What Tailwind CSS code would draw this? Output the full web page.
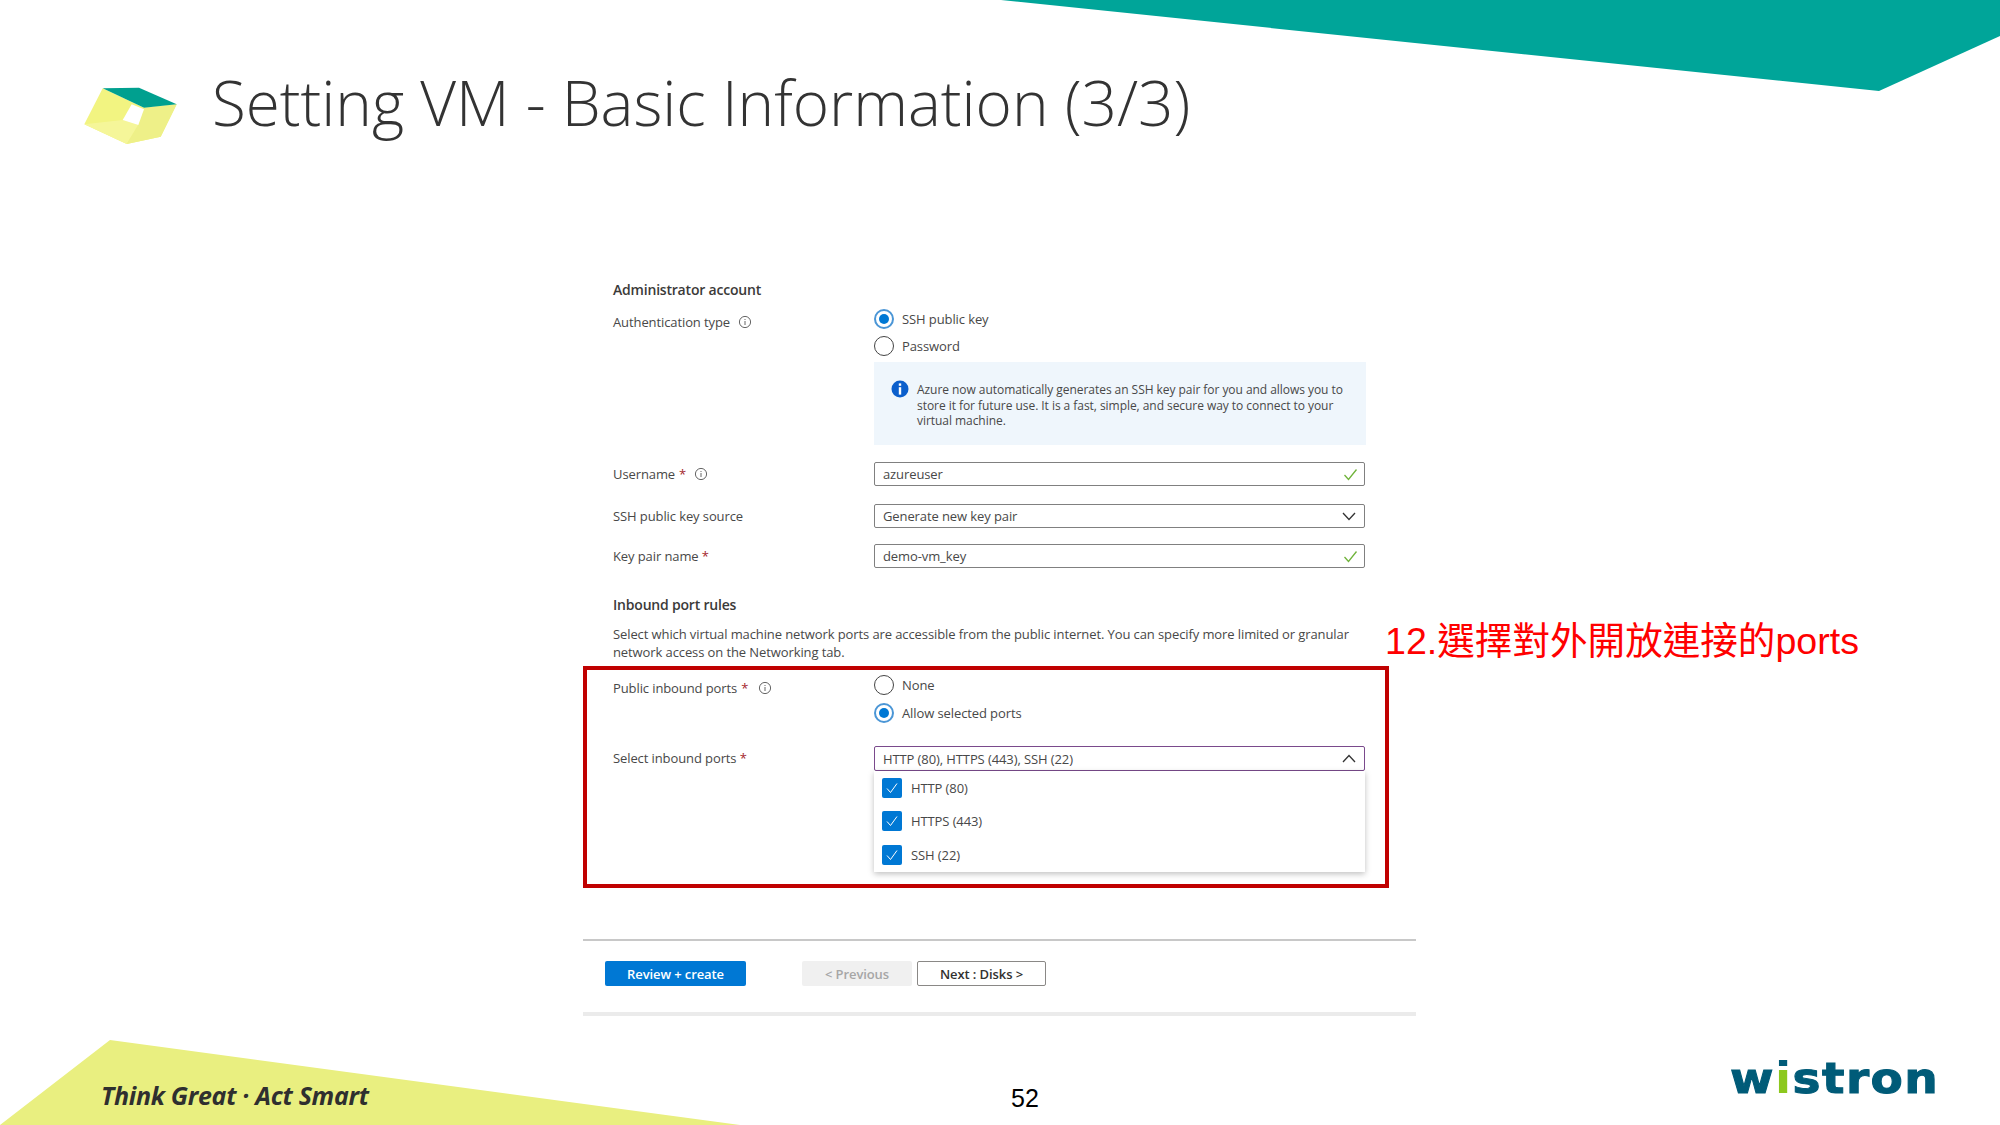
<!DOCTYPE html>
<html lang="en">
<head>
    <meta charset="UTF-8">
    <title>Setting VM - Basic Information (3/3)</title>
    <script src="https://cdn.jsdelivr.net/npm/@tailwindcss/browser@4"></script>
</head>

<body class="bg-white">
    <div class="relative w-[2000px] h-[1125px] overflow-hidden bg-white font-['Open_Sans',sans-serif]">
        <!-- Slide decoration -->
        <svg class="absolute left-0 top-0 w-[2000px] h-[1125px]" viewBox="0 0 2000 1125">
            <polygon points="1001,0 2000,0 2000,36 1879,91" fill="#00a599"/>
            <polygon points="0,1125 110,1040 740,1125" fill="#e9ef80"/>
        </svg>

        <div class="relative">
            <!-- Title -->
            <div class="flex items-center h-[205px] pl-[84px] pb-[2px]">
                <svg class="w-[96px] h-[60px] mr-[32px] mt-[28px]" viewBox="84 86 96 60">
                    <polygon points="102.7,88.3 84.3,124.3 126.7,144 160.7,136.7 176.7,104.3 144,107.7" fill="#f2f481"/>
                    <polygon points="84.3,124.3 122.7,120 138.3,125 126.7,144" fill="#f5f699"/>
                    <polygon points="144,107.7 176.7,104.3 160.7,136.7 126.7,144 138.3,125" fill="#eef088"/>
                    <polygon points="102.7,88.3 139,87.7 176.7,104.3 144,107.7" fill="#00a08f"/>
                    <polygon points="131.7,104.3 144,109.3 138.3,125 122.7,120" fill="#ffffff"/>
                </svg>
                <h1 class="text-[62px] leading-none font-light text-[#333333] font-['Open_Sans',sans-serif]">Setting VM - Basic Information (3/3)</h1>
            </div>

            <!-- Azure form -->
            <div class="ml-[583px] w-[833px] pt-[75px] text-[13px] leading-[18px] tracking-[-0.1px] text-[#484848]">
                <div class="pl-[30px] h-[20px] text-[14px] leading-[20px] tracking-[-0.2px] font-semibold text-[#3b3a39]">Administrator account</div>

                <div class="grid grid-cols-[261px_491px] pl-[30px] mt-[8px]">
                    <div class="flex items-center gap-[8px] h-[22px] mt-[3px]">
                        Authentication type
                        <svg class="w-[14px] h-[14px]" viewBox="0 0 14 14"><circle cx="7" cy="7" r="5.6" fill="none" stroke="#666" stroke-width="1"/><path d="M7 6v4M7 4v1" stroke="#666" stroke-width="1"/></svg>
                    </div>
                    <div>
                        <div class="flex items-center gap-[8px] h-[22px]">
                            <span class="flex items-center justify-center w-[20px] h-[20px] rounded-full border-2 border-[#4b96d6]"><span class="w-[10px] h-[10px] rounded-full bg-[#0078d4]"></span></span>
                            SSH public key
                        </div>
                        <div class="flex items-center gap-[8px] h-[22px] mt-[5px]">
                            <span class="w-[20px] h-[20px] rounded-full border-[1.5px] border-[#444444]"></span>
                            Password
                        </div>
                        <div class="flex w-[492px] h-[83px] mt-[5px] pl-[17px] pt-[18px] gap-[8px] bg-[#eff6fc] text-[12px] tracking-[-0.05px] leading-[15.5px]">
                            <svg class="w-[18px] h-[18px] shrink-0" viewBox="0 0 18 18"><circle cx="9" cy="9" r="8.5" fill="#0b5fcc"/><rect x="7.8" y="3.4" width="2.4" height="2.4" fill="#fff"/><rect x="7.8" y="7.2" width="2.4" height="7.4" fill="#fff"/></svg>
                            <p class="w-[440px] mt-[2px]">Azure now automatically generates an SSH key pair for you and allows you to store it for future use. It is a fast, simple, and secure way to connect to your virtual machine.</p>
                        </div>
                    </div>
                </div>

                <div class="grid grid-cols-[261px_491px] pl-[30px] mt-[17px] items-center">
                    <div class="flex items-center h-[24px]">Username <span class="text-[#a4262c] ml-[4px]">*</span>
                        <svg class="w-[14px] h-[14px] ml-[8px]" viewBox="0 0 14 14"><circle cx="7" cy="7" r="5.6" fill="none" stroke="#666" stroke-width="1"/><path d="M7 6v4M7 4v1" stroke="#666" stroke-width="1"/></svg>
                    </div>
                    <div class="flex items-center justify-between h-[24px] pl-[8px] pr-[6px] border border-[#808080] rounded-[2px]">
                        azureuser
                        <svg class="w-[15px] h-[13px]" viewBox="0 0 15 13"><path d="M1.5 7l4 4.5 8-10" fill="none" stroke="#6fb33a" stroke-width="1.3"/></svg>
                    </div>
                </div>

                <div class="grid grid-cols-[261px_491px] pl-[30px] mt-[18px] items-center">
                    <div class="h-[24px] leading-[24px]">SSH public key source</div>
                    <div class="flex items-center justify-between h-[24px] pl-[8px] pr-[8px] border border-[#808080] rounded-[2px]">
                        Generate new key pair
                        <svg class="w-[14px] h-[9px]" viewBox="0 0 14 9"><path d="M1 1l6 6.5L13 1" fill="none" stroke="#333" stroke-width="1.3"/></svg>
                    </div>
                </div>

                <div class="grid grid-cols-[261px_491px] pl-[30px] mt-[16px] items-center">
                    <div class="h-[24px] leading-[24px]">Key pair name <span class="text-[#a4262c]">*</span></div>
                    <div class="flex items-center justify-between h-[24px] pl-[8px] pr-[6px] border border-[#808080] rounded-[2px]">
                        demo-vm_key
                        <svg class="w-[15px] h-[13px]" viewBox="0 0 15 13"><path d="M1.5 7l4 4.5 8-10" fill="none" stroke="#6fb33a" stroke-width="1.3"/></svg>
                    </div>
                </div>

                <div class="pl-[30px] mt-[27px] h-[20px] text-[14px] leading-[20px] tracking-[-0.2px] font-semibold text-[#3b3a39]">Inbound port rules</div>
                <p class="ml-[30px] w-[745px] mt-[10px]">Select which virtual machine network ports are accessible from the public internet. You can specify more limited or granular network access on the Networking tab.</p>

                <!-- Highlighted part -->
                <div class="w-[806px] h-[222px] mt-[5px] pl-[26px] pt-[4px] border-4 border-[#c00000]">
                    <div class="grid grid-cols-[261px_491px]">
                        <div class="flex items-center h-[22px] mt-[3px]">Public inbound ports <span class="text-[#a4262c] ml-[4px]">*</span>
                            <svg class="w-[14px] h-[14px] ml-[10px]" viewBox="0 0 14 14"><circle cx="7" cy="7" r="5.6" fill="none" stroke="#666" stroke-width="1"/><path d="M7 6v4M7 4v1" stroke="#666" stroke-width="1"/></svg>
                        </div>
                        <div>
                            <div class="flex items-center gap-[8px] h-[22px]">
                                <span class="w-[20px] h-[20px] rounded-full border-[1.5px] border-[#444444]"></span>
                                None
                            </div>
                            <div class="flex items-center gap-[8px] h-[22px] mt-[6px]">
                                <span class="flex items-center justify-center w-[20px] h-[20px] rounded-full border-2 border-[#4b96d6]"><span class="w-[10px] h-[10px] rounded-full bg-[#0078d4]"></span></span>
                                Allow selected ports
                            </div>
                        </div>
                    </div>

                    <div class="grid grid-cols-[261px_491px] mt-[22px]">
                        <div class="h-[25px] leading-[25px]">Select inbound ports <span class="text-[#a4262c]">*</span></div>
                        <div>
                            <div class="flex items-center justify-between h-[25px] pl-[8px] pr-[8px] border border-[#7a4a8c] rounded-[2px]">
                                HTTP (80), HTTPS (443), SSH (22)
                                <svg class="w-[14px] h-[9px]" viewBox="0 0 14 9"><path d="M1 8l6-6.5L13 8" fill="none" stroke="#333" stroke-width="1.3"/></svg>
                            </div>
                            <div class="shadow-[0_2px_6px_rgba(0,0,0,0.25)]">
                                <div class="flex items-center gap-[9px] h-[33.5px] pl-[8px]">
                                    <span class="flex items-center justify-center w-[20px] h-[20px] rounded-[2px] bg-[#0078d4]"><svg class="w-[14px] h-[12px]" viewBox="0 0 14 12"><path d="M2 6.5l3.5 4L12 1.5" fill="none" stroke="#fff" stroke-width="1"/></svg></span>
                                    HTTP (80)
                                </div>
                                <div class="flex items-center gap-[9px] h-[33.5px] pl-[8px]">
                                    <span class="flex items-center justify-center w-[20px] h-[20px] rounded-[2px] bg-[#0078d4]"><svg class="w-[14px] h-[12px]" viewBox="0 0 14 12"><path d="M2 6.5l3.5 4L12 1.5" fill="none" stroke="#fff" stroke-width="1"/></svg></span>
                                    HTTPS (443)
                                </div>
                                <div class="flex items-center gap-[9px] h-[33.5px] pl-[8px]">
                                    <span class="flex items-center justify-center w-[20px] h-[20px] rounded-[2px] bg-[#0078d4]"><svg class="w-[14px] h-[12px]" viewBox="0 0 14 12"><path d="M2 6.5l3.5 4L12 1.5" fill="none" stroke="#fff" stroke-width="1"/></svg></span>
                                    SSH (22)
                                </div>
                            </div>
                        </div>
                    </div>
                </div>

                <div class="h-[2px] mt-[51px] bg-[#c8c8c8]"></div>
                <div class="flex items-center h-[25px] mt-[20px] pl-[22px] font-semibold">
                    <div class="flex items-center justify-center w-[141px] h-full rounded-[2px] bg-[#0078d4] text-white">Review + create</div>
                    <div class="flex items-center justify-center w-[110px] h-full ml-[56px] rounded-[2px] bg-[#f0f0f0] text-[#a6a6a6]">&lt; Previous</div>
                    <div class="flex items-center justify-center w-[129px] h-full ml-[5px] rounded-[2px] border border-[#8a8886] text-[#323130]">Next : Disks &gt;</div>
                </div>
                <div class="h-[4px] mt-[26px] bg-[#ebebeb]"></div>
            </div>

            <!-- Footer -->
            <div class="flex items-center h-[68px] mt-[41px]">
                <div class="w-[1001px] pl-[101px] mt-[10px] text-[25px] font-bold italic tracking-[-0.3px] text-[#2f2f2f]">Think Great · Act Smart</div>
                <div class="w-[48px] mt-[15px] text-center text-[25px] text-black font-['Liberation_Sans',sans-serif]">52</div>
                <div class="ml-[681px] mb-[24px] origin-left scale-x-[1.12] text-[42px] leading-none font-bold tracking-[1.3px] text-[#005b78] [-webkit-text-stroke:1px_#005b78] font-['DejaVu_Sans',sans-serif]">w<span class="bg-[linear-gradient(#005b78_30%,#8cc81e_30%)] bg-clip-text text-transparent [-webkit-text-stroke:0]">i</span>stron</div>
            </div>
        </div>

        <!-- Callout next to the red box -->
        <div class="absolute left-[1385px] top-[618px] text-[37.6px] leading-[46px] text-[#ff0000] whitespace-nowrap font-['Liberation_Sans','Noto_Sans_CJK_TC',sans-serif]">12.選擇對外開放連接的ports</div>
    </div>
</body>
</html>
